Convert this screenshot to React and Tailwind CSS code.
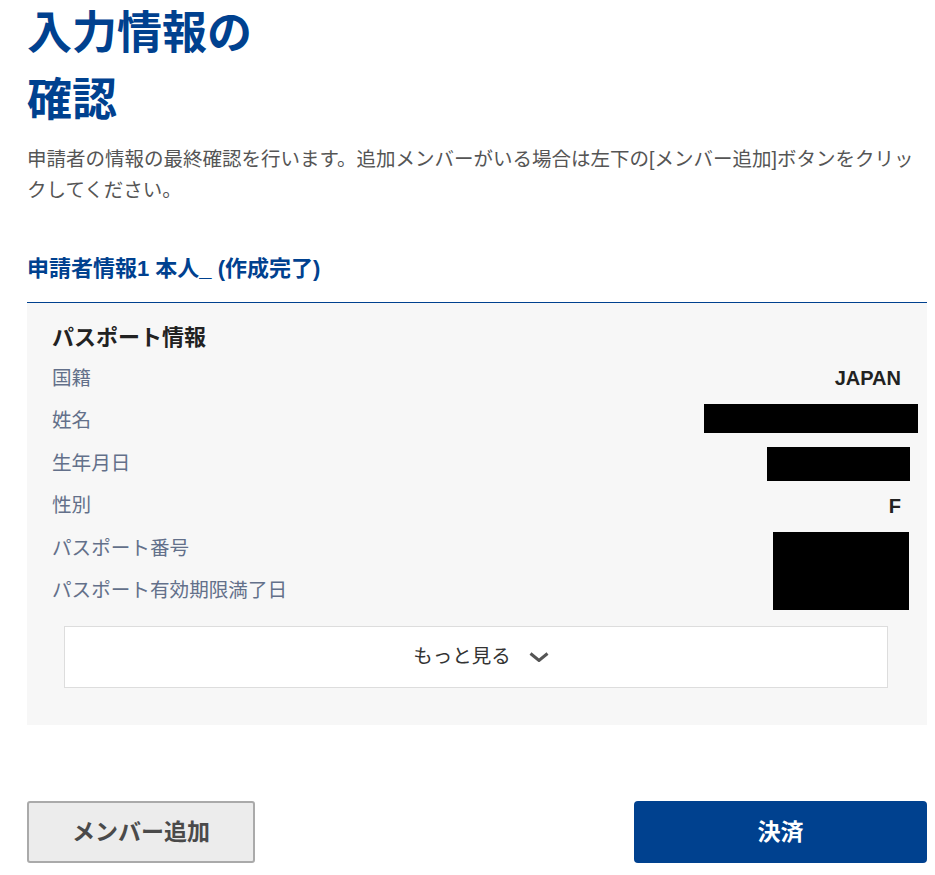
export default function App() {
  const rows = [
    { label: '国籍', value: 'JAPAN' },
    { label: '姓名', value: '' },
    { label: '生年月日', value: '' },
    { label: '性別', value: 'F' },
    { label: 'パスポート番号', value: '' },
    { label: 'パスポート有効期限満了日', value: '' },
  ];

  return (
    <div className="min-h-screen bg-white pl-[27px] pr-[8px] pb-[12px] font-['Liberation_Sans','Noto_Sans_CJK_JP',sans-serif]">
      {/* Title */}
      <h1 className="w-[260px] text-[45px] font-bold leading-[67px] text-[#00418f]">入力情報の確認</h1>

      <p className="mt-[10px] text-[19.5px] leading-[31px] text-[#555555]">
        申請者の情報の最終確認を行います。追加メンバーがいる場合は左下の[メンバー追加]ボタンをクリックしてください。
      </p>

      {/* Applicant section */}
      <h2 className="mt-[48px] pb-[18px] text-[22px] font-bold leading-[30px] text-[#00418f] border-b border-[#00418f]">
        申請者情報1 本人_ (作成完了)
      </h2>

      <div className="relative bg-[#f7f7f7] pl-[25px] pr-[26px] pt-[20px] pb-[37px]">
        <h3 className="text-[22px] font-bold leading-[30px] text-[#222222]">パスポート情報</h3>

        <div className="mt-[4px]">
          {rows.map((r) => (
            <div key={r.label} className="flex h-[42.5px] items-center justify-between">
              <span className="text-[19.6px] text-[#63708a]">{r.label}</span>
              <span className="text-[20px] font-bold text-[#222222]">{r.value}</span>
            </div>
          ))}
        </div>

        {/* redacted values */}
        <div className="absolute right-[9px] top-[101px] h-[29px] w-[214px] bg-black" />
        <div className="absolute right-[17px] top-[144px] h-[34px] w-[143px] bg-black" />
        <div className="absolute right-[18px] top-[229px] h-[78px] w-[136px] bg-black" />

        <button className="mt-[14px] ml-[12px] mr-[13px] flex h-[62px] w-[calc(100%-25px)] items-center justify-center gap-[18px] border border-[#dddddd] bg-white pl-[10px]">
          <span className="text-[19.5px] text-[#333333]">もっと見る</span>
          <svg width="20" height="10" viewBox="0 0 20 10" fill="none">
            <polyline points="1.5,1.5 10,8.5 18.5,1.5" stroke="#555555" strokeWidth="3" />
          </svg>
        </button>
      </div>

      {/* Actions */}
      <div className="mt-[76px] flex items-center justify-between">
        <button className="h-[62px] w-[228px] rounded-[3px] border-2 border-[#aaaaaa] bg-[#ececec] text-[23px] font-bold text-[#4a4a4a]">
          メンバー追加
        </button>
        <button className="h-[62px] w-[293px] rounded-[4px] bg-[#00418f] text-[23px] font-bold text-white">
          決済
        </button>
      </div>
    </div>
  );
}
